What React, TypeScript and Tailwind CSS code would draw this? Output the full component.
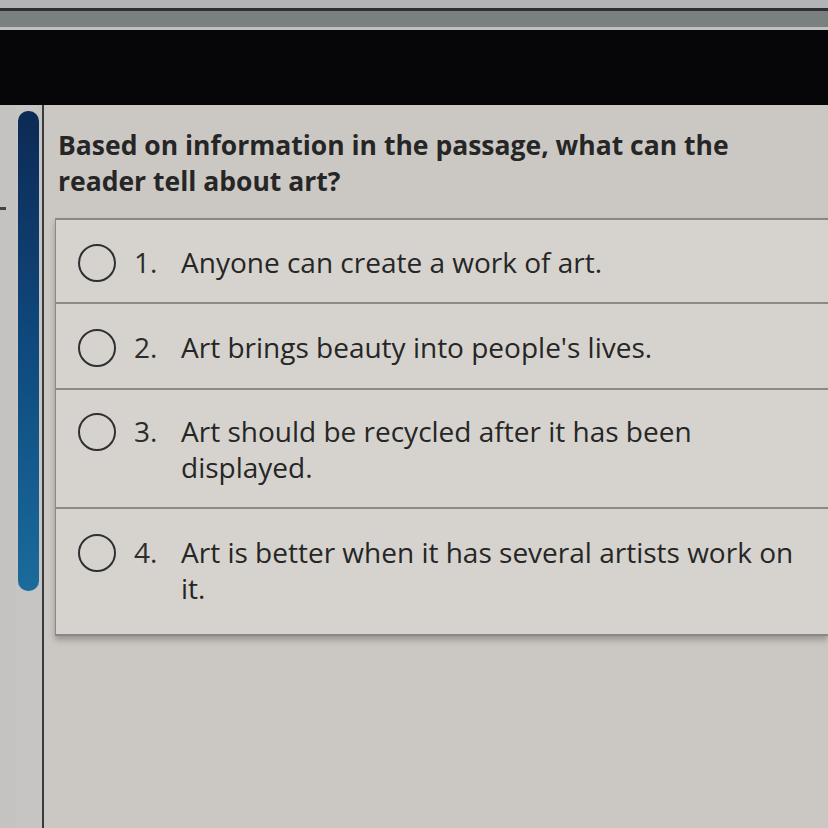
import React from 'react'

const options = [
  { n: '1.', text: 'Anyone can create a work of art.', pad: 'pt-[24px] pb-[20px]' },
  { n: '2.', text: "Art brings beauty into people's lives.", pad: 'pt-[25px] pb-[21px]' },
  { n: '3.', text: 'Art should be recycled after it has been displayed.', pad: 'pt-[23px] pb-[22px]' },
  { n: '4.', text: 'Art is better when it has several artists work on it.', pad: 'pt-[25px] pb-[28px]' },
]

function Radio() {
  return <div className="w-[38px] h-[38px] shrink-0 rounded-full border-[2.5px] border-[#2f3033]" />
}

export default function App() {
  return (
    <div className="w-[828px] h-[828px] overflow-hidden flex flex-col bg-[#cbc8c4]" style={{ fontFamily: '"Open Sans", "Noto Sans", sans-serif' }}>
      {/* top chrome */}
      <div className="h-[8px] bg-[#b3b4b8]" />
      <div className="h-[3px] bg-[#2e3032]" />
      <div className="h-[16px] bg-[#7a7f80]" />
      <div className="h-[3px] bg-[#bfc0c0]" />
      <div className="h-[75px] bg-[#060608]" />

      <div className="flex flex-1">
        {/* left gutter */}
        <div className="w-[16px] bg-[#c4c3c1] relative">
          <div className="absolute left-0 top-[102px] w-[6px] h-[3px] bg-[#444]" />
        </div>
        {/* scrollbar */}
        <div className="w-[26px] bg-[#c6c5c3] pt-[6px] px-[2px]">
          <div className="h-[480px] w-[21px] rounded-[10px] bg-gradient-to-b from-[#0c2a55] via-[#0f4a7e] to-[#1a6c9b]" />
        </div>
        <div className="w-[2px] bg-[#3a3b3d]" />

        {/* content */}
        <div className="flex-1 pt-[22px] pl-[11px]">
          <p className="pl-[3px] pr-[60px] text-[26.5px] font-bold leading-[36px] text-[#262626]">
            Based on information in the passage, what can the reader tell about art?
          </p>

          <div className="mt-[19px] border-t-2 border-b-2 border-l border-[#8a8784] bg-[#d6d3cf] shadow-[0_4px_6px_rgba(0,0,0,0.25)]">
            {options.map((o, i) => (
              <div
                key={o.n}
                className={`flex items-start pl-[22px] pr-[14px] ${o.pad} ${i > 0 ? 'border-t-2 border-[#8d8a86]' : ''}`}
              >
                <Radio />
                <span className="w-[47px] ml-[18px] shrink-0 text-[28px] font-medium leading-[36px] text-[#2c2c2c]">{o.n}</span>
                <span className="flex-1 text-[28px] font-medium leading-[36px] text-[#262626]">{o.text}</span>
              </div>
            ))}
          </div>
        </div>
      </div>
    </div>
  )
}
